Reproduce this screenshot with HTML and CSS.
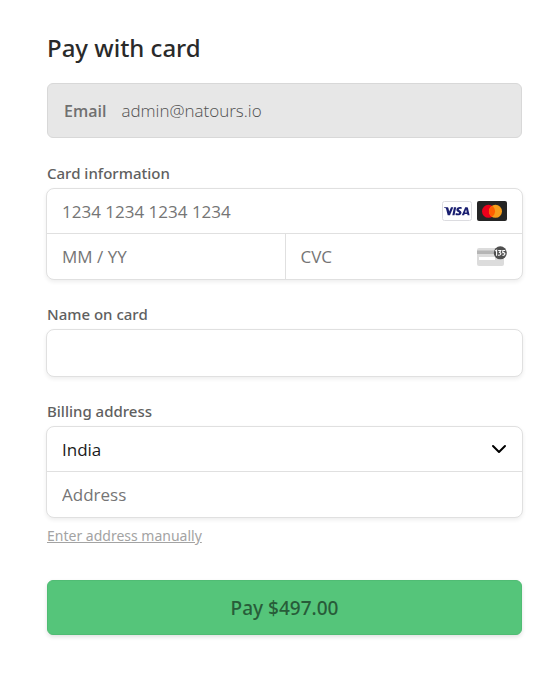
FILE: index.html
```html
<!DOCTYPE html>
<html lang="en">
<head>
<meta charset="utf-8">
<meta name="viewport" content="width=device-width, initial-scale=1">
<title>Pay with card</title>
<link rel="stylesheet" href="styles.css">
</head>
<body>
<main class="checkout">
  <h1 class="title">Pay with card</h1>
  <form>
    <div class="email">
      <label class="email-label" for="email">Email</label>
      <input class="email-input" id="email" type="email" value="admin@natours.io" readonly>
    </div>

    <fieldset class="section">
      <legend class="label">Card information</legend>
      <div class="group">
        <div class="row">
          <input class="field" type="text" aria-label="Card number" placeholder="1234 1234 1234 1234">
          <div class="icons">
            <svg width="30" height="20" viewBox="0 0 30 20" role="img" aria-label="Visa">
              <rect x=".5" y=".5" width="29" height="19" rx="2" fill="#fff" stroke="#dcdce0"/>
              <path fill="#1a1f71" d="M2 6.2h3.4c.6 0 .9.3 1 .8l.8 3.6 1.8-4.4h2.3l-3.3 8H5.7L4.1 8c-.1-.6-.4-.7-.9-.9L2 6.7zM12 6.2h2.2l-1.7 8h-2.2zM19.8 6.4l-.3 1.7c-.9-.4-2.7-.5-2.7.3 0 .9 2.7 1.1 2.7 3.1 0 2.9-3.7 3.3-6 2.4l.3-1.8c1 .5 3.3.7 3.3-.2s-2.7-1-2.7-3.1c0-2.7 3.2-3.3 5.4-2.4zM23.3 6.2h1.8c.4 0 .7.2.8.6l1.7 7.4h-2.1l-.2-1.1h-2.7l-.5 1.1h-2.3l3.1-7.3c.1-.4.2-.7.4-.7zm.8 2.4-1.1 2.9h1.8z"/>
            </svg>
            <svg width="30" height="20" viewBox="0 0 30 20" role="img" aria-label="Mastercard">
              <rect width="30" height="20" rx="2" fill="#252525"/>
              <circle cx="11.5" cy="10.3" r="6.5" fill="#eb001b"/>
              <circle cx="18.5" cy="10.3" r="6.5" fill="#f79e1b"/>
              <path fill="#ff5f00" d="M15 4.8a6.5 6.5 0 0 1 0 11 6.5 6.5 0 0 1 0-11z"/>
            </svg>
          </div>
        </div>
        <div class="row row-split">
          <input class="field" type="text" aria-label="Expiry date" placeholder="MM / YY">
          <div class="cell">
            <input class="field" type="text" aria-label="Security code" placeholder="CVC">
            <div class="icons">
              <svg width="30" height="21" viewBox="0 0 30 21" aria-hidden="true">
                <rect y="2" width="27" height="18" rx="2" fill="#dcdcdc"/>
                <path fill="#b5b5b5" d="M0 4.5h27v3.5H0z"/>
                <path fill="#fff" d="M2 11h16v3H2z"/>
                <circle cx="23.3" cy="6.8" r="6.5" fill="#4f4f4f"/>
                <g fill="none" stroke="#fff" stroke-width="1.1"><path d="m18.2 5 1.4-.8v5.6"/><path d="M21.2 4.5h2.6l-1.3 2c2.3.2 1.6 3.3-1.4 2.6M28.2 4.5h-2.4v2.2c3-.5 2.7 3.2-.4 2.5"/></g>
              </svg>
            </div>
          </div>
        </div>
      </div>
    </fieldset>

    <div class="section">
      <label class="label" for="name">Name on card</label>
      <div class="group">
        <div class="row row-single"><input class="field" id="name" type="text"></div>
      </div>
    </div>

    <fieldset class="section">
      <legend class="label">Billing address</legend>
      <div class="group">
        <div class="row">
          <select class="field country" aria-label="Country"><option>India</option></select>
          <svg class="chevron" width="16" height="10" viewBox="0 0 16 10" aria-hidden="true"><path d="m2 2 6 6 6-6" fill="none" stroke="#000" stroke-width="2" stroke-linecap="round" stroke-linejoin="round"/></svg>
        </div>
        <div class="row">
          <input class="field" type="text" aria-label="Address" placeholder="Address">
        </div>
      </div>
      <a class="manual" href="#">Enter address manually</a>
    </fieldset>

    <button class="pay" type="submit">Pay $497.00</button>
  </form>
</main>
</body>
</html>
```
FILE: styles.css
```css
* {
  box-sizing: border-box;
}

body {
  margin: 0;
  background: #fff;
  color: #2a2a2a;
  font-family: "Segoe UI", "Noto Sans", "Open Sans", sans-serif;
}

input,
select,
button {
  font: inherit;
}

.checkout {
  padding: 32px 36px 44px 47px;
}

.title {
  margin: 0 0 19px;
  font-size: 24px;
  line-height: 32px;
  font-weight: 500;
}

.email {
  display: flex;
  align-items: center;
  gap: 15px;
  height: 55px;
  margin-bottom: 24px;
  padding: 0 16px;
  background: #e7e7e7;
  border: 1px solid #d8d8d8;
  border-radius: 6px;
  color: #707070;
  font-family: "Segoe UI", "Open Sans", "Noto Sans", sans-serif;
  font-size: 17px;
}

.email-label {
  font-size: 16px;
  font-weight: 600;
}

.email-input {
  flex: 1;
  min-width: 0;
  padding: 0;
  border: 0;
  outline: 0;
  background: none;
  color: #505050;
  font-weight: 300;
}

.section {
  min-width: 0;
  margin: 23px 0 0;
  padding: 0;
  border: 0;
}

.label {
  display: block;
  padding: 0 0 4px;
  color: #606060;
  font-size: 15px;
  line-height: 22px;
  font-weight: 500;
}

.group {
  margin: 0 -1px;
  background: #fff;
  border: 1px solid #e0e0e0;
  border-radius: 8px;
  box-shadow: 0 2px 4px rgba(0, 0, 0, 0.07);
}

.row {
  position: relative;
  display: flex;
  align-items: center;
  height: 44px;
}

.row + .row {
  height: 46px;
  border-top: 1px solid #e0e0e0;
}

.row-split {
  display: grid;
  grid-template-columns: 1fr 1fr;
}

.row-single {
  height: 46px;
}

.field {
  flex: 1;
  min-width: 0;
  height: 100%;
  padding: 0 15px;
  border: 0;
  outline: 0;
  background: none;
  color: #1a1a1a;
  font-family: "Segoe UI", "Open Sans", "Noto Sans", sans-serif;
  font-size: 17px;
}

.field::placeholder {
  color: #757575;
  opacity: 1;
}

.cell {
  display: flex;
  align-items: center;
  min-width: 0;
  height: 100%;
  border-left: 1px solid #e0e0e0;
}

.icons {
  display: flex;
  gap: 5px;
  padding-right: 15px;
}

.country {
  appearance: none;
}

.chevron {
  position: absolute;
  right: 15px;
  pointer-events: none;
}

.manual {
  display: block;
  width: max-content;
  margin-top: 7px;
  color: #a3a3a3;
  font-size: 14px;
  line-height: 22px;
}

.pay {
  display: block;
  width: 100%;
  height: 55px;
  margin-top: 33px;
  border: 1px solid #50bc74;
  border-radius: 6px;
  background: #55c57a;
  box-shadow: 0 2px 4px rgba(0, 0, 0, 0.12);
  color: #285c39;
  font-size: 19px;
  font-weight: 500;
}
```
